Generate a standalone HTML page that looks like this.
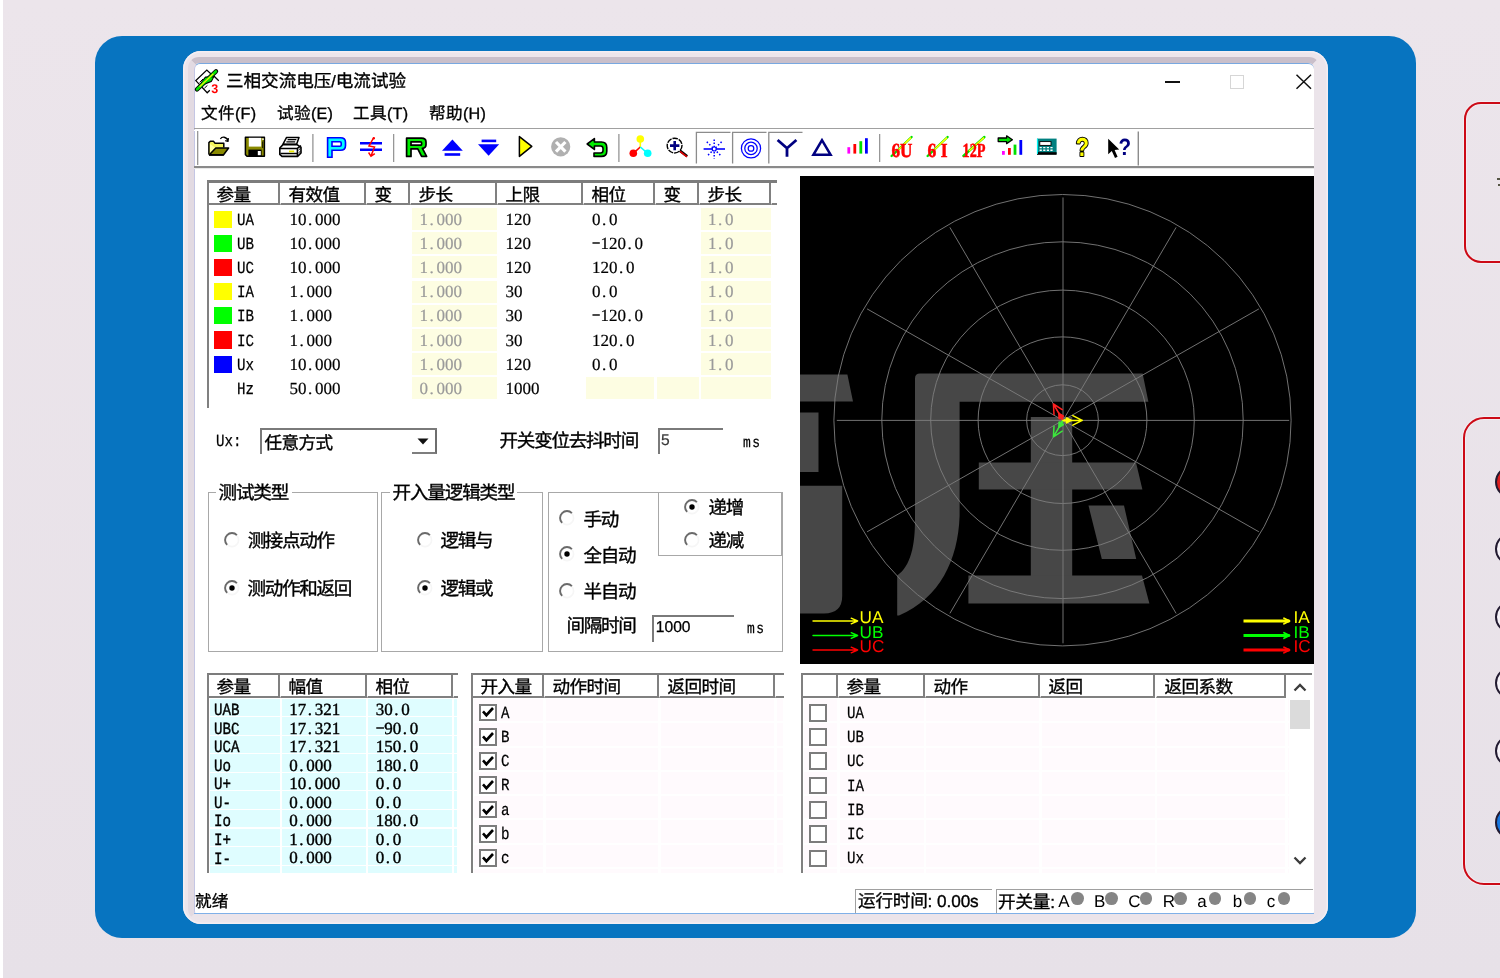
<!DOCTYPE html>
<html lang="zh"><head><meta charset="utf-8"><title>三相交流电压/电流试验</title>
<style>
html,body{margin:0;padding:0}
#page{left:0;top:0;width:1500px;height:978px;overflow:hidden;background:linear-gradient(#ece5eb,#e7e1e8)}
body{text-rendering:geometricPrecision;width:1500px;height:978px;position:relative;background:#e9e3e9;font-family:"Liberation Sans",sans-serif}
div,span,svg.cj,svg.abs{position:absolute}
svg{overflow:visible}
.blue{background:#0774c0;border-radius:27px}
.bezel{border-radius:18px;background:#ece5eb;box-shadow:inset 0 0 0 1.5px #f3eef3}
.bezin{border-radius:11px;box-sizing:border-box;border-top:6.5px solid #c9bfca;border-left:6px solid #e2dae2;border-right:6px solid #ebe4ea;border-bottom:6px solid #ebe4ea;filter:blur(.6px)}
.screen{background:#fff;border-radius:6px 6px 3px 3px;border-top:1.5px solid #78a8e0;border-left:1.2px solid #c4c6e4;box-sizing:border-box}
.redbox{border:2.6px solid #cc0a16;border-radius:21px;box-sizing:border-box;box-shadow:0 0 0 1px #f3edf2, inset 0 0 0 1px #f3edf2}
.m{font-family:"Liberation Mono",monospace;font-size:17px;line-height:17px;-webkit-text-stroke:.25px currentColor;transform:scaleX(.833);transform-origin:0 0;white-space:pre;color:#000}
.mb{-webkit-text-stroke:.4px #000}
.s{font-family:"Liberation Sans",sans-serif;line-height:1.15;white-space:pre}
svg.cj text{font-family:"Liberation Sans","Noto Sans CJK SC",sans-serif;stroke-width:20}
.hd{background:#fff;box-sizing:border-box;border-right:2px solid #808080;border-bottom:2px solid #808080;border-left:1px solid #fff}
.hdlast{border-right:none}
.combo{box-sizing:border-box;border-top:2px solid #7a7a7a;border-left:2px solid #7a7a7a;background:#fff}
.cbtn{box-sizing:border-box;border-right:2px solid #6e6e6e;border-bottom:2px solid #7e7e7e;background:#fff}
.edit{box-sizing:border-box;border-top:2px solid #7a7a7a;border-left:2px solid #7a7a7a;background:#fff}
.grp{box-sizing:border-box;border:1px solid #a8a8a8}
.chk{box-sizing:border-box;border:2.4px solid #7c7c7c;background:#fff}
.sbox{box-sizing:border-box;border-top:1px solid #a0a0a0;border-left:1px solid #a0a0a0}

.n{font-family:"Liberation Serif",serif;font-size:17px;line-height:17px;white-space:pre;color:#000;-webkit-text-stroke:.2px currentColor}
.n b{display:inline-block;width:8.5px;text-align:left;text-indent:1.5px;font-weight:normal}
.n b.d{text-align:center;text-indent:0;transform:translateY(-1.8px) scaleX(1.55)}
.nb{-webkit-text-stroke:.4px #000}
#app{filter:blur(.45px)}

</style></head>
<body>
<div id="page">
<div style="left:0.0px;top:0.0px;width:3.0px;height:978.0px;background:#fff"></div>
<div class="blue" style="left:94.5px;top:36.0px;width:1321.0px;height:901.8px;"></div>
<div class="bezel" style="left:182.5px;top:50.5px;width:1145.5px;height:873.3px;"></div>
<div class="bezin" style="left:188.0px;top:56.5px;width:1131.5px;height:863.8px;"></div>
<div class="screen" style="left:194.0px;top:63.2px;width:1119.5px;height:851.0px;"></div>
<div class="redbox" style="left:1464.0px;top:101.5px;width:80.0px;height:161.2px;border-radius:17px"></div>
<div class="redbox" style="left:1463.0px;top:416.5px;width:80.0px;height:468.3px;"></div>
<div style="left:1495.2px;top:465.7px;width:32.6px;height:32.6px;border-radius:50%;background:#dd1f1f;border:2.2px solid #221a30;box-sizing:border-box"></div>
<div style="left:1495.2px;top:532.7px;width:32.6px;height:32.6px;border-radius:50%;background:#f6f2f8;border:2.2px solid #221a30;box-sizing:border-box"></div>
<div style="left:1495.2px;top:600.7px;width:32.6px;height:32.6px;border-radius:50%;background:#f6f2f8;border:2.2px solid #221a30;box-sizing:border-box"></div>
<div style="left:1495.2px;top:666.7px;width:32.6px;height:32.6px;border-radius:50%;background:#f6f2f8;border:2.2px solid #221a30;box-sizing:border-box"></div>
<div style="left:1495.2px;top:734.7px;width:32.6px;height:32.6px;border-radius:50%;background:#f6f2f8;border:2.2px solid #221a30;box-sizing:border-box"></div>
<div style="left:1495.2px;top:806.2px;width:32.6px;height:32.6px;border-radius:50%;background:#1878e0;border:2.2px solid #221a30;box-sizing:border-box"></div>
<div style="left:1497.0px;top:178.0px;width:4.0px;height:2.0px;background:#554"></div>
<div style="left:1497.5px;top:184.0px;width:4.0px;height:2.0px;background:#554"></div>
<div id="app" style="left:0;top:0;width:1500px;height:978px">
<svg class="abs" style="left:194px;top:68px" width="28" height="28" viewBox="194 68 28 28">
<title>app icon</title>
<path d="M210.8 73.8 L206.8 70 L195.8 80.6 L207.2 92.8 L209.8 90.2 M213.6 75.8 L218.8 80.7" fill="none" stroke="#000" stroke-width="1.25"/>
<path d="M199.6 82.4 L203 79 M204.4 88.2 L207.4 85.4" fill="none" stroke="#000" stroke-width="1"/>
<path d="M197 89.4 L216 71.3" stroke="#000" stroke-width="4.4" stroke-linecap="round"/>
<path d="M201.6 82.6 L205.4 77.4 L213.4 77 L211.2 81.2 L203.6 84.2 Z" fill="#000" stroke="#000" stroke-width="1.6" stroke-linejoin="round"/>
<path d="M197.2 89.2 L215.8 71.5" stroke="#00e400" stroke-width="2.7" stroke-linecap="round"/>
<path d="M201.8 82.6 L205.6 77.8 L213 77.4 L211 81 L203.6 83.8 Z" fill="#00e400"/>
<path d="M199.6 86.8 L213.4 73.8" stroke="#f4f000" stroke-width="1.2"/>
<text x="211.2" y="92.7" font-family="Liberation Sans" font-weight="bold" font-size="12.6" fill="#ff0000" textLength="7" lengthAdjust="spacingAndGlyphs">3</text>
</svg>

<svg class="cj" style="left:226.0px;top:72.2px;" width="180.0" height="17.6" viewBox="0 -880 10256 1000" fill="#000" stroke="#000" stroke-width="18"><title>三相交流电压/电流试验</title><text x="0" y="0" font-size="1000">三相交流电压</text><text x="6000.0" y="0" font-size="920.0">/</text><text x="6256" y="0" font-size="1000">电流试验</text></svg>
<div style="left:1165.0px;top:81.2px;width:14.5px;height:1.6px;background:#111"></div>
<div style="left:1230.0px;top:75.0px;width:14.0px;height:13.5px;border:1px solid #d6d6d6;box-sizing:border-box"></div>
<svg class="abs" style="left:1295px;top:73px" width="18" height="18" viewBox="0 0 18 18"><path d="M1.5 1.8 L16 15.8 M16 1.8 L1.5 15.8" stroke="#111" stroke-width="1.5" fill="none"/></svg>
<svg class="cj" style="left:201.0px;top:104.3px;" width="55.2" height="17.0" viewBox="0 -880 3247 1000" fill="#000" stroke="#000" stroke-width="18"><title>文件(F)</title><text x="0" y="0" font-size="1000">文件</text><text x="2000.0" y="0" font-size="976.5">(F)</text></svg>
<svg class="cj" style="left:277.0px;top:104.3px;" width="56.1" height="17.0" viewBox="0 -880 3302 1000" fill="#000" stroke="#000" stroke-width="18"><title>试验(E)</title><text x="0" y="0" font-size="1000">试验</text><text x="2000.0" y="0" font-size="976.5">(E)</text></svg>
<svg class="cj" style="left:353.0px;top:104.3px;" width="55.2" height="17.0" viewBox="0 -880 3247 1000" fill="#000" stroke="#000" stroke-width="18"><title>工具(T)</title><text x="0" y="0" font-size="1000">工具</text><text x="2000.0" y="0" font-size="976.5">(T)</text></svg>
<svg class="cj" style="left:429.0px;top:104.3px;" width="57.0" height="17.0" viewBox="0 -880 3355 1000" fill="#000" stroke="#000" stroke-width="18"><title>帮助(H)</title><text x="0" y="0" font-size="1000">帮助</text><text x="2000.0" y="0" font-size="976.5">(H)</text></svg>
<div style="left:194.0px;top:128.2px;width:1119.5px;height:1.3px;background:#a0a0a0"></div>
<div style="left:194.0px;top:129.5px;width:1119.5px;height:1.0px;background:#fff"></div>
<svg class="abs" style="left:194px;top:129px" width="1119" height="38" viewBox="194 129 1119 38">
<title>toolbar</title>
<!-- grip + separators -->
<g stroke="#8c8c8c" stroke-width="1.4">
<path d="M197.8 131 V165"/>
<path d="M313 134 V162"/><path d="M393.8 134 V162"/><path d="M619 134 V162"/><path d="M879.8 134 V162"/><path d="M1138.3 131.5 V165.5"/>
</g>
<g stroke="#fff" stroke-width="1.2"><path d="M199.2 131 V165"/><path d="M314.3 134 V162"/><path d="M395.1 134 V162"/><path d="M620.3 134 V162"/><path d="M881.1 134 V162"/></g>
<!-- open -->
<g stroke-linejoin="round">
<path d="M208.9 154.6 V142.6 L210.3 141.3 H213.6 L214.9 143.2 H223.8 V147.6" fill="#f2f25a" stroke="#000" stroke-width="1.5"/>
<path d="M210 144 L215.4 147.8 L210 153 Z" fill="#ffffa0"/>
<path d="M209.4 154.8 L215.8 148 H228.6 L223.6 154.8 Z" fill="#8a8a00" stroke="#000" stroke-width="1.5"/>
<path d="M209 155.2 H223.8" stroke="#000" stroke-width="1.3"/>
<path d="M220.4 139 C221.8 136.4 226.4 136.4 228 140.6 M228.4 138.2 L228 141.4 L225.2 140.6" fill="none" stroke="#000" stroke-width="1.3"/>
</g>
<!-- save -->
<g>
<path d="M245.4 137.3 H264.4 V156.2 H247 L245.4 154.6 Z" fill="#8a8a00" stroke="#000" stroke-width="1.5" stroke-linejoin="round"/>
<rect x="248.8" y="137.8" width="12.4" height="8.8" fill="#fff"/>
<rect x="248.4" y="149.6" width="13.2" height="6.6" fill="#000"/>
<rect x="257.8" y="151" width="3" height="4.2" fill="#fff"/>
<rect x="262.3" y="138.4" width="1.4" height="1.6" fill="#fff"/>
<path d="M262.6 141.5 V148" stroke="#000" stroke-width=".8"/>
</g>
<!-- print -->
<g stroke="#000" stroke-linejoin="round">
<path d="M283 144.2 L286.6 137.4 H299 L296.6 144.2 Z" fill="#fff" stroke-width="1.5"/>
<path d="M287.6 139.6 H296.4 M286.4 141.8 H295.2" stroke-width="1.3" fill="none"/>
<path d="M279.8 148 L283 144.6 H297 L301 147.4 V153 L297.6 156.4 H282 L279.8 154.4 Z" fill="#fff" stroke-width="1.6"/>
<path d="M280 148.4 H297.4 L301 145.6 M297.4 148.4 V156 M280.4 153.6 H297.2" fill="none" stroke-width="1.5"/>
<path d="M298.4 150.2 L300.6 148.2 M298.4 153 L300.6 151 M298.4 155.4 L300.6 153.4" stroke-width="1" fill="none"/>
<path d="M289 151.4 H294.2" stroke="#e8e800" stroke-width="1.8"/>
</g>
<!-- P -->
<path d="M327.6 157.2 V137.8 H340.5 Q345.5 137.8 345.5 142.2 V145.8 Q345.5 150.2 340.5 150.2 H332 V157.2 Z M332 141.8 V146.2 H340 Q341.2 146.2 341.2 145 V143 Q341.2 141.8 340 141.8 Z" fill="#00ffff" stroke="#0000ff" stroke-width="1.6" fill-rule="evenodd"/>
<!-- not equal -->
<g fill="none">
<path d="M360 143.3 H382 M360 149.8 H382" stroke="#0000ff" stroke-width="2.4"/>
<path d="M373.8 137.5 L369 146 L374.5 147 L371.2 155.5 M368.6 152.5 L371 156.3 L374.8 153.6" stroke="#ff0000" stroke-width="1.5"/>
<circle cx="373.8" cy="138.2" r="1.2" fill="#ff0000"/>
</g>
<!-- R -->
<path d="M406.6 156.4 V138.2 H421.5 Q426 138.2 426 142 V144.8 Q426 148 422.4 148.4 L426.6 156.4 H421.6 L417.8 148.8 H411 V156.4 Z M411 141.8 V145.2 H420.4 Q421.6 145.2 421.6 144.2 V142.8 Q421.6 141.8 420.4 141.8 Z" fill="#00ee00" stroke="#000" stroke-width="1.7" fill-rule="evenodd" stroke-linejoin="round"/>
<!-- up -->
<path d="M452.4 139.4 L462.8 150.8 H442 Z" fill="#0000ff"/><rect x="444.6" y="153.2" width="15.6" height="2.6" fill="#0000ff"/>
<!-- down -->
<rect x="481.6" y="139.6" width="14.6" height="2.6" fill="#0000ff"/><path d="M478 144.2 H499.2 L488.6 155.8 Z" fill="#0000ff"/>
<!-- play -->
<path d="M519.4 136.6 L531.8 146.4 L519.4 156.4 Z" fill="#ffff00" stroke="#000" stroke-width="1.5" stroke-linejoin="round"/>
<!-- stop -->
<circle cx="560.7" cy="146.8" r="9.6" fill="#b0b0b0"/>
<path d="M556 142 L565.4 151.6 M565.4 142 L556 151.6" stroke="#fff" stroke-width="3.2"/>
<!-- undo -->
<path d="M594.4 138.6 L587.2 144 L594.4 149.4 V146 H600.6 Q603 146 603 148.6 V150.6 Q603 153 600.6 153 H594 V156.4 H601.4 Q606.8 156.4 606.8 151.2 V147.6 Q606.8 142 601.4 142 H594.4 Z" fill="#00ee00" stroke="#000" stroke-width="1.6" stroke-linejoin="round"/>
<!-- three dots -->
<path d="M640.3 139 V147" stroke="#ffff00" stroke-width="1.6"/>
<path d="M640.3 147 L633.3 153.3" stroke="#ff0000" stroke-width="1.6"/>
<path d="M640.3 147 L647.7 153.3" stroke="#00ffff" stroke-width="1.6"/>
<circle cx="640.3" cy="139" r="3.8" fill="#ffff00"/><circle cx="633.3" cy="153.3" r="3.8" fill="#ff0000"/><circle cx="647.7" cy="153.3" r="3.8" fill="#00ffff"/>
<!-- zoom -->
<path d="M679.8 150.6 L687.2 156.2" stroke="#000" stroke-width="2.6"/>
<path d="M680 151.4 L687 156.8" stroke="#e00000" stroke-width="1.7"/>
<circle cx="674.6" cy="145.6" r="7.4" fill="#fff" stroke="#000" stroke-width="1.4" stroke-dasharray="5.5 1"/>
<path d="M670 145.6 H679.4 M674.7 141 V150.3" stroke="#000080" stroke-width="2.6"/>
<!-- pressed buttons -->
<g fill="none" stroke="#8c8c8c" stroke-width="1.3">
<path d="M696.4 163.5 V132.3 H730.5"/><path d="M732.6 163.5 V132.3 H766.5"/><path d="M768.8 163.5 V132.3 H802.5"/>
</g>
<!-- star -->
<g stroke="#0000ff" fill="none">
<path d="M703.6 149 H725" stroke-width="1.6"/>
<path d="M714.2 139.5 V158.5" stroke-width="1.5" stroke-dasharray="1.5 1.6"/>
<path d="M706.8 141.8 L721.6 156.4 M721.6 141.8 L706.8 156.4" stroke-width="1.5" stroke-dasharray="1.5 2"/>
<circle cx="714.2" cy="149" r="2" stroke-width="1.2" fill="#fff"/>
</g>
<!-- rings -->
<g stroke="#0000ff" fill="none" stroke-width="1.25"><circle cx="751" cy="148.4" r="9.6"/><circle cx="751" cy="148.4" r="6.2"/><circle cx="751" cy="148.4" r="2.8"/></g>
<!-- Y -->
<path d="M777.6 140 L787 148.2 L796.4 140 M787 147.6 V156.8" fill="none" stroke="#000080" stroke-width="2.8"/>
<!-- triangle -->
<path d="M822 140.2 L813.4 154.8 H830.6 Z" fill="none" stroke="#000080" stroke-width="2.5" stroke-linejoin="miter"/>
<!-- bars -->
<rect x="847.4" y="147.2" width="2.8" height="6.4" fill="#ff00ff"/><rect x="853.4" y="144" width="2.8" height="9.6" fill="#ff0000"/><rect x="859.4" y="141.2" width="2.8" height="12.4" fill="#00e000"/><rect x="865" y="138.2" width="2.8" height="15.4" fill="#0000ff"/>
<!-- 6U 6I 12P -->
<g font-family="Liberation Serif" font-weight="bold" font-size="20" fill="#ff0000" stroke="#ff0000" stroke-width=".5">
<path d="M891.6 156 L911.6 137" stroke="#00e000" stroke-width="2.4" stroke-linecap="round"/><path d="M897 151 L911 137.6" stroke="#ffff00" stroke-width="1.5"/>
<text x="891.5" y="156.6" textLength="21" lengthAdjust="spacingAndGlyphs">6U</text>
<path d="M927.6 156 L947.6 137" stroke="#00e000" stroke-width="2.4" stroke-linecap="round"/><path d="M933 151 L947 137.6" stroke="#ffff00" stroke-width="1.5"/>
<text x="927.5" y="156.6" textLength="20" lengthAdjust="spacingAndGlyphs">6 I</text>
<path d="M963.4 156 L984.4 137" stroke="#00e000" stroke-width="2.4" stroke-linecap="round"/><path d="M969 151 L984 137.6" stroke="#ffff00" stroke-width="1.5"/>
<text x="962.6" y="156.6" textLength="23" lengthAdjust="spacingAndGlyphs">12P</text>
</g>
<!-- arrow + bars -->
<path d="M998.2 138 H1006.6 V135.8 L1012.4 139.8 L1006.6 143.6 V141.6 H998.2 Z" fill="#00e000" stroke="#000" stroke-width="1.3" stroke-linejoin="round"/>
<rect x="1002" y="151" width="2.8" height="3.8" fill="#ff00ff"/><rect x="1008" y="148" width="2.8" height="6.8" fill="#ff0000"/><rect x="1013.6" y="144.6" width="2.8" height="10.2" fill="#00e000"/><rect x="1019.4" y="140" width="2.8" height="14.8" fill="#0000ff"/>
<!-- calculator -->
<rect x="1037" y="138.6" width="19.6" height="15.6" fill="#008080"/>
<rect x="1037" y="152.2" width="19.6" height="2.6" fill="#000"/>
<rect x="1039.8" y="141.6" width="11.2" height="3.8" fill="#fff" stroke="#000" stroke-width=".9"/>
<path d="M1039.6 147.6 H1054 M1039.6 150.2 H1054" stroke="#fff" stroke-width="1.4" stroke-dasharray="2.2 1.4"/>
<path d="M1037.4 138.6 V154" stroke="#00ffff" stroke-width="1"/>
<!-- ? -->
<g font-family="Liberation Sans" font-weight="bold">
<text x="1075.8" y="156" font-size="26" font-weight="bold" fill="#ffff00" stroke="#000" stroke-width="2.2" paint-order="stroke" stroke-linejoin="round" textLength="13.2" lengthAdjust="spacingAndGlyphs">?</text>
<text x="1118.4" y="155.2" font-family="Liberation Sans" font-weight="bold" font-size="23.5" fill="#000080" textLength="12.6" lengthAdjust="spacingAndGlyphs">?</text>
</g>
<path d="M1108.2 138.8 V154.2 L1111.8 151 L1115 158 L1117.6 156.8 L1114.6 150 L1119.2 149.6 Z" fill="#000"/>
</svg>

<div style="left:194.0px;top:165.5px;width:1119.5px;height:2.0px;background:#8a8a8a"></div>
<div style="left:194.0px;top:167.5px;width:1119.5px;height:1.5px;background:#e8e8e8"></div>
<div style="left:206.5px;top:180.3px;width:570.5px;height:2.4px;background:#7c7c7c"></div><div class="hd" style="left:207.5px;top:182.5px;width:72.2px;height:22.5px;"></div><svg class="cj" style="left:216.5px;top:184.7px;" width="34.0" height="17.9" viewBox="0 -880 1905 1000" fill="#000" stroke="#000" stroke-width="14"><title>参量</title><text x="-24" y="0" font-size="1000" letter-spacing="-47.6">参量</text></svg><div class="hd" style="left:279.7px;top:182.5px;width:86.5px;height:22.5px;"></div><svg class="cj" style="left:288.7px;top:184.7px;" width="51.0" height="17.9" viewBox="0 -880 2857 1000" fill="#000" stroke="#000" stroke-width="14"><title>有效值</title><text x="-24" y="0" font-size="1000" letter-spacing="-47.6">有效值</text></svg><div class="hd" style="left:366.2px;top:182.5px;width:43.8px;height:22.5px;"></div><svg class="cj" style="left:375.2px;top:184.7px;" width="17.0" height="17.9" viewBox="0 -880 952 1000" fill="#000" stroke="#000" stroke-width="14"><title>变</title><text x="-24" y="0" font-size="1000" letter-spacing="-47.6">变</text></svg><div class="hd" style="left:410.0px;top:182.5px;width:86.5px;height:22.5px;"></div><svg class="cj" style="left:419.0px;top:184.7px;" width="34.0" height="17.9" viewBox="0 -880 1905 1000" fill="#000" stroke="#000" stroke-width="14"><title>步长</title><text x="-24" y="0" font-size="1000" letter-spacing="-47.6">步长</text></svg><div class="hd" style="left:496.5px;top:182.5px;width:86.3px;height:22.5px;"></div><svg class="cj" style="left:505.5px;top:184.7px;" width="34.0" height="17.9" viewBox="0 -880 1905 1000" fill="#000" stroke="#000" stroke-width="14"><title>上限</title><text x="-24" y="0" font-size="1000" letter-spacing="-47.6">上限</text></svg><div class="hd" style="left:582.8px;top:182.5px;width:72.4px;height:22.5px;"></div><svg class="cj" style="left:591.8px;top:184.7px;" width="34.0" height="17.9" viewBox="0 -880 1905 1000" fill="#000" stroke="#000" stroke-width="14"><title>相位</title><text x="-24" y="0" font-size="1000" letter-spacing="-47.6">相位</text></svg><div class="hd" style="left:655.2px;top:182.5px;width:43.8px;height:22.5px;"></div><svg class="cj" style="left:664.2px;top:184.7px;" width="17.0" height="17.9" viewBox="0 -880 952 1000" fill="#000" stroke="#000" stroke-width="14"><title>变</title><text x="-24" y="0" font-size="1000" letter-spacing="-47.6">变</text></svg><div class="hd" style="left:699.0px;top:182.5px;width:72.0px;height:22.5px;"></div><svg class="cj" style="left:708.0px;top:184.7px;" width="34.0" height="17.9" viewBox="0 -880 1905 1000" fill="#000" stroke="#000" stroke-width="14"><title>步长</title><text x="-24" y="0" font-size="1000" letter-spacing="-47.6">步长</text></svg><div class="hd hdlast" style="left:771.0px;top:182.5px;width:6.0px;height:22.5px;"></div>
<div style="left:206.5px;top:181.0px;width:2.0px;height:226.5px;background:#808080"></div>
<div style="left:412.0px;top:208.0px;width:84.5px;height:22.2px;background:#fdfde2"></div>
<div style="left:701.0px;top:208.0px;width:70.3px;height:22.2px;background:#fdfde2"></div>
<div style="left:214.0px;top:210.6px;width:17.5px;height:17.2px;background:#ffff00"></div>
<span class="m" style="left:237.3px;top:212.8px;">UA</span>
<span class="n" style="left:289.5px;top:210.8px;">10<b>.</b>000</span>
<span class="n" style="left:419.5px;top:210.8px;color:#9a9a9a;">1<b>.</b>000</span>
<span class="n" style="left:505.5px;top:210.8px;">120</span>
<span class="n" style="left:592.0px;top:210.8px;">0<b>.</b>0</span>
<span class="n" style="left:708.0px;top:210.8px;color:#9a9a9a;">1<b>.</b>0</span>
<div style="left:412.0px;top:232.2px;width:84.5px;height:22.2px;background:#fdfde2"></div>
<div style="left:701.0px;top:232.2px;width:70.3px;height:22.2px;background:#fdfde2"></div>
<div style="left:214.0px;top:234.8px;width:17.5px;height:17.2px;background:#00ff00"></div>
<span class="m" style="left:237.3px;top:237.0px;">UB</span>
<span class="n" style="left:289.5px;top:235.0px;">10<b>.</b>000</span>
<span class="n" style="left:419.5px;top:235.0px;color:#9a9a9a;">1<b>.</b>000</span>
<span class="n" style="left:505.5px;top:235.0px;">120</span>
<span class="n" style="left:592.0px;top:235.0px;"><b class="d">-</b>120<b>.</b>0</span>
<span class="n" style="left:708.0px;top:235.0px;color:#9a9a9a;">1<b>.</b>0</span>
<div style="left:412.0px;top:256.3px;width:84.5px;height:22.2px;background:#fdfde2"></div>
<div style="left:701.0px;top:256.3px;width:70.3px;height:22.2px;background:#fdfde2"></div>
<div style="left:214.0px;top:258.9px;width:17.5px;height:17.2px;background:#ff0000"></div>
<span class="m" style="left:237.3px;top:261.1px;">UC</span>
<span class="n" style="left:289.5px;top:259.1px;">10<b>.</b>000</span>
<span class="n" style="left:419.5px;top:259.1px;color:#9a9a9a;">1<b>.</b>000</span>
<span class="n" style="left:505.5px;top:259.1px;">120</span>
<span class="n" style="left:592.0px;top:259.1px;">120<b>.</b>0</span>
<span class="n" style="left:708.0px;top:259.1px;color:#9a9a9a;">1<b>.</b>0</span>
<div style="left:412.0px;top:280.5px;width:84.5px;height:22.2px;background:#fdfde2"></div>
<div style="left:701.0px;top:280.5px;width:70.3px;height:22.2px;background:#fdfde2"></div>
<div style="left:214.0px;top:283.1px;width:17.5px;height:17.2px;background:#ffff00"></div>
<span class="m" style="left:237.3px;top:285.3px;">IA</span>
<span class="n" style="left:289.5px;top:283.3px;">1<b>.</b>000</span>
<span class="n" style="left:419.5px;top:283.3px;color:#9a9a9a;">1<b>.</b>000</span>
<span class="n" style="left:505.5px;top:283.3px;">30</span>
<span class="n" style="left:592.0px;top:283.3px;">0<b>.</b>0</span>
<span class="n" style="left:708.0px;top:283.3px;color:#9a9a9a;">1<b>.</b>0</span>
<div style="left:412.0px;top:304.6px;width:84.5px;height:22.2px;background:#fdfde2"></div>
<div style="left:701.0px;top:304.6px;width:70.3px;height:22.2px;background:#fdfde2"></div>
<div style="left:214.0px;top:307.2px;width:17.5px;height:17.2px;background:#00ff00"></div>
<span class="m" style="left:237.3px;top:309.4px;">IB</span>
<span class="n" style="left:289.5px;top:307.4px;">1<b>.</b>000</span>
<span class="n" style="left:419.5px;top:307.4px;color:#9a9a9a;">1<b>.</b>000</span>
<span class="n" style="left:505.5px;top:307.4px;">30</span>
<span class="n" style="left:592.0px;top:307.4px;"><b class="d">-</b>120<b>.</b>0</span>
<span class="n" style="left:708.0px;top:307.4px;color:#9a9a9a;">1<b>.</b>0</span>
<div style="left:412.0px;top:328.8px;width:84.5px;height:22.2px;background:#fdfde2"></div>
<div style="left:701.0px;top:328.8px;width:70.3px;height:22.2px;background:#fdfde2"></div>
<div style="left:214.0px;top:331.4px;width:17.5px;height:17.2px;background:#ff0000"></div>
<span class="m" style="left:237.3px;top:333.6px;">IC</span>
<span class="n" style="left:289.5px;top:331.6px;">1<b>.</b>000</span>
<span class="n" style="left:419.5px;top:331.6px;color:#9a9a9a;">1<b>.</b>000</span>
<span class="n" style="left:505.5px;top:331.6px;">30</span>
<span class="n" style="left:592.0px;top:331.6px;">120<b>.</b>0</span>
<span class="n" style="left:708.0px;top:331.6px;color:#9a9a9a;">1<b>.</b>0</span>
<div style="left:412.0px;top:353.0px;width:84.5px;height:22.2px;background:#fdfde2"></div>
<div style="left:701.0px;top:353.0px;width:70.3px;height:22.2px;background:#fdfde2"></div>
<div style="left:214.0px;top:355.6px;width:17.5px;height:17.2px;background:#0000ff"></div>
<span class="m" style="left:237.3px;top:357.8px;">Ux</span>
<span class="n" style="left:289.5px;top:355.8px;">10<b>.</b>000</span>
<span class="n" style="left:419.5px;top:355.8px;color:#9a9a9a;">1<b>.</b>000</span>
<span class="n" style="left:505.5px;top:355.8px;">120</span>
<span class="n" style="left:592.0px;top:355.8px;">0<b>.</b>0</span>
<span class="n" style="left:708.0px;top:355.8px;color:#9a9a9a;">1<b>.</b>0</span>
<div style="left:412.0px;top:377.1px;width:84.5px;height:22.2px;background:#fdfde2"></div>
<div style="left:586.0px;top:377.1px;width:68.0px;height:22.2px;background:#fdfde2"></div>
<div style="left:657.0px;top:377.1px;width:41.5px;height:22.2px;background:#fdfde2"></div>
<div style="left:701.0px;top:377.1px;width:70.3px;height:22.2px;background:#fdfde2"></div>
<span class="m" style="left:237.3px;top:381.9px;">Hz</span>
<span class="n" style="left:289.5px;top:379.9px;">50<b>.</b>000</span>
<span class="n" style="left:419.5px;top:379.9px;color:#9a9a9a;">0<b>.</b>000</span>
<span class="n" style="left:505.5px;top:379.9px;">1000</span>
<span class="m" style="left:216.0px;top:433.5px;">Ux:</span>
<div class="combo" style="left:260.0px;top:428.0px;width:176.5px;height:25.5px;"></div>
<svg class="cj" style="left:265.0px;top:432.6px;" width="68.0" height="17.9" viewBox="0 -880 3810 1000" fill="#000" stroke="#000" stroke-width="14"><title>任意方式</title><text x="-24" y="0" font-size="1000" letter-spacing="-47.6">任意方式</text></svg>
<div class="cbtn" style="left:412.0px;top:430.0px;width:25.0px;height:23.5px;"></div>
<svg class="abs" style="left:417px;top:438px" width="12" height="7" viewBox="0 0 12 7"><path d="M0.5 0.5 H11.5 L6 6.5 Z" fill="#111"/></svg>
<svg class="cj" style="left:499.6px;top:431.2px;" width="138.4" height="18.2" viewBox="0 -880 7619 1000" fill="#000" stroke="#000" stroke-width="14"><title>开关变位去抖时间</title><text x="-24" y="0" font-size="1000" letter-spacing="-47.6">开关变位去抖时间</text></svg>
<div class="edit" style="left:657.5px;top:428.0px;width:65.0px;height:26.0px;"></div>
<span class="s" style="left:661.0px;top:431.8px;font-size:15.6px;color:#3a3a3a;-webkit-text-stroke:.2px #3a3a3a">5</span>
<span class="m" style="left:743.0px;top:435.0px;letter-spacing:1.8px;font-size:15.5px">ms</span>
<div class="grp" style="left:207.8px;top:492.4px;width:170.6px;height:159.6px;"></div><div style="left:216.0px;top:490.4px;width:76.0px;height:5.0px;background:#fff"></div><svg class="cj" style="left:218.5px;top:482.7px;" width="69.6" height="18.3" viewBox="0 -880 3810 1000" fill="#000" stroke="#000" stroke-width="14"><title>测试类型</title><text x="-24" y="0" font-size="1000" letter-spacing="-47.6">测试类型</text></svg>
<div class="grp" style="left:381.3px;top:492.4px;width:161.5px;height:159.6px;"></div><div style="left:390.0px;top:490.4px;width:127.0px;height:5.0px;background:#fff"></div><svg class="cj" style="left:392.5px;top:482.7px;" width="121.8" height="18.3" viewBox="0 -880 6667 1000" fill="#000" stroke="#000" stroke-width="14"><title>开入量逻辑类型</title><text x="-24" y="0" font-size="1000" letter-spacing="-47.6">开入量逻辑类型</text></svg>
<div class="grp" style="left:548.0px;top:492.4px;width:234.6px;height:159.6px;"></div>
<div class="grp" style="left:658.0px;top:492.4px;width:124.3px;height:63.4px;background:#fff"></div>
<svg class="abs" style="left:223.0px;top:530.5px" width="18" height="18" viewBox="-9 -9 18 18"><circle r="6.6" fill="#fff" stroke="#f6f6f6" stroke-width="1.6"/><path d="M-4.9 4.9 A6.9 6.9 0 0 1 4.9 -4.9" fill="none" stroke="#6a6a6a" stroke-width="1.9"/></svg>
<svg class="cj" style="left:248.0px;top:530.8px;" width="86.3" height="18.1" viewBox="0 -880 4762 1000" fill="#000" stroke="#000" stroke-width="14"><title>测接点动作</title><text x="-24" y="0" font-size="1000" letter-spacing="-47.6">测接点动作</text></svg>
<svg class="abs" style="left:223.0px;top:579.0px" width="18" height="18" viewBox="-9 -9 18 18"><circle r="6.6" fill="#fff" stroke="#f6f6f6" stroke-width="1.6"/><path d="M-4.9 4.9 A6.9 6.9 0 0 1 4.9 -4.9" fill="none" stroke="#6a6a6a" stroke-width="1.9"/><circle r="2.7" fill="#000"/></svg>
<svg class="cj" style="left:248.0px;top:579.4px;" width="103.5" height="18.1" viewBox="0 -880 5714 1000" fill="#000" stroke="#000" stroke-width="14"><title>测动作和返回</title><text x="-24" y="0" font-size="1000" letter-spacing="-47.6">测动作和返回</text></svg>
<svg class="abs" style="left:416.0px;top:530.5px" width="18" height="18" viewBox="-9 -9 18 18"><circle r="6.6" fill="#fff" stroke="#f6f6f6" stroke-width="1.6"/><path d="M-4.9 4.9 A6.9 6.9 0 0 1 4.9 -4.9" fill="none" stroke="#6a6a6a" stroke-width="1.9"/></svg>
<svg class="cj" style="left:441.0px;top:530.8px;" width="51.8" height="18.1" viewBox="0 -880 2857 1000" fill="#000" stroke="#000" stroke-width="14"><title>逻辑与</title><text x="-24" y="0" font-size="1000" letter-spacing="-47.6">逻辑与</text></svg>
<svg class="abs" style="left:416.0px;top:579.0px" width="18" height="18" viewBox="-9 -9 18 18"><circle r="6.6" fill="#fff" stroke="#f6f6f6" stroke-width="1.6"/><path d="M-4.9 4.9 A6.9 6.9 0 0 1 4.9 -4.9" fill="none" stroke="#6a6a6a" stroke-width="1.9"/><circle r="2.7" fill="#000"/></svg>
<svg class="cj" style="left:441.0px;top:579.4px;" width="51.8" height="18.1" viewBox="0 -880 2857 1000" fill="#000" stroke="#000" stroke-width="14"><title>逻辑或</title><text x="-24" y="0" font-size="1000" letter-spacing="-47.6">逻辑或</text></svg>
<svg class="abs" style="left:558.0px;top:509.0px" width="18" height="18" viewBox="-9 -9 18 18"><circle r="6.6" fill="#fff" stroke="#f6f6f6" stroke-width="1.6"/><path d="M-4.9 4.9 A6.9 6.9 0 0 1 4.9 -4.9" fill="none" stroke="#6a6a6a" stroke-width="1.9"/></svg>
<svg class="cj" style="left:584.0px;top:509.8px;" width="34.5" height="18.1" viewBox="0 -880 1905 1000" fill="#000" stroke="#000" stroke-width="14"><title>手动</title><text x="-24" y="0" font-size="1000" letter-spacing="-47.6">手动</text></svg>
<svg class="abs" style="left:558.0px;top:545.0px" width="18" height="18" viewBox="-9 -9 18 18"><circle r="6.6" fill="#fff" stroke="#f6f6f6" stroke-width="1.6"/><path d="M-4.9 4.9 A6.9 6.9 0 0 1 4.9 -4.9" fill="none" stroke="#6a6a6a" stroke-width="1.9"/><circle r="2.7" fill="#000"/></svg>
<svg class="cj" style="left:584.0px;top:545.6px;" width="51.8" height="18.1" viewBox="0 -880 2857 1000" fill="#000" stroke="#000" stroke-width="14"><title>全自动</title><text x="-24" y="0" font-size="1000" letter-spacing="-47.6">全自动</text></svg>
<svg class="abs" style="left:558.0px;top:581.5px" width="18" height="18" viewBox="-9 -9 18 18"><circle r="6.6" fill="#fff" stroke="#f6f6f6" stroke-width="1.6"/><path d="M-4.9 4.9 A6.9 6.9 0 0 1 4.9 -4.9" fill="none" stroke="#6a6a6a" stroke-width="1.9"/></svg>
<svg class="cj" style="left:584.0px;top:582.1px;" width="51.8" height="18.1" viewBox="0 -880 2857 1000" fill="#000" stroke="#000" stroke-width="14"><title>半自动</title><text x="-24" y="0" font-size="1000" letter-spacing="-47.6">半自动</text></svg>
<svg class="abs" style="left:683.0px;top:498.0px" width="18" height="18" viewBox="-9 -9 18 18"><circle r="6.6" fill="#fff" stroke="#f6f6f6" stroke-width="1.6"/><path d="M-4.9 4.9 A6.9 6.9 0 0 1 4.9 -4.9" fill="none" stroke="#6a6a6a" stroke-width="1.9"/><circle r="2.7" fill="#000"/></svg>
<svg class="cj" style="left:709.0px;top:498.2px;" width="34.5" height="18.1" viewBox="0 -880 1905 1000" fill="#000" stroke="#000" stroke-width="14"><title>递增</title><text x="-24" y="0" font-size="1000" letter-spacing="-47.6">递增</text></svg>
<svg class="abs" style="left:683.0px;top:530.5px" width="18" height="18" viewBox="-9 -9 18 18"><circle r="6.6" fill="#fff" stroke="#f6f6f6" stroke-width="1.6"/><path d="M-4.9 4.9 A6.9 6.9 0 0 1 4.9 -4.9" fill="none" stroke="#6a6a6a" stroke-width="1.9"/></svg>
<svg class="cj" style="left:709.0px;top:530.8px;" width="34.5" height="18.1" viewBox="0 -880 1905 1000" fill="#000" stroke="#000" stroke-width="14"><title>递减</title><text x="-24" y="0" font-size="1000" letter-spacing="-47.6">递减</text></svg>
<svg class="cj" style="left:566.5px;top:616.1px;" width="69.0" height="18.1" viewBox="0 -880 3810 1000" fill="#000" stroke="#000" stroke-width="14"><title>间隔时间</title><text x="-24" y="0" font-size="1000" letter-spacing="-47.6">间隔时间</text></svg>
<div class="edit" style="left:651.5px;top:614.5px;width:82.0px;height:27.0px;"></div>
<span class="s" style="left:655.8px;top:618.6px;font-size:15.6px;color:#000;-webkit-text-stroke:.3px #000">1000</span>
<span class="m" style="left:747.0px;top:620.5px;letter-spacing:1.8px;font-size:15.5px">ms</span>
<div style="left:206.5px;top:672.8px;width:251.0px;height:2.4px;background:#7c7c7c"></div><div class="hd" style="left:207.5px;top:675.0px;width:72.5px;height:22.5px;"></div><svg class="cj" style="left:216.5px;top:677.2px;" width="34.0" height="17.9" viewBox="0 -880 1905 1000" fill="#000" stroke="#000" stroke-width="14"><title>参量</title><text x="-24" y="0" font-size="1000" letter-spacing="-47.6">参量</text></svg><div class="hd" style="left:280.0px;top:675.0px;width:86.5px;height:22.5px;"></div><svg class="cj" style="left:289.0px;top:677.2px;" width="34.0" height="17.9" viewBox="0 -880 1905 1000" fill="#000" stroke="#000" stroke-width="14"><title>幅值</title><text x="-24" y="0" font-size="1000" letter-spacing="-47.6">幅值</text></svg><div class="hd" style="left:366.5px;top:675.0px;width:86.5px;height:22.5px;"></div><svg class="cj" style="left:375.5px;top:677.2px;" width="34.0" height="17.9" viewBox="0 -880 1905 1000" fill="#000" stroke="#000" stroke-width="14"><title>相位</title><text x="-24" y="0" font-size="1000" letter-spacing="-47.6">相位</text></svg><div class="hd hdlast" style="left:453.0px;top:675.0px;width:4.5px;height:22.5px;"></div>
<div style="left:206.5px;top:673.5px;width:2.0px;height:199.5px;background:#808080"></div>
<div style="left:209.5px;top:698.7px;width:70.3px;height:17.5px;background:#dffdff"></div>
<div style="left:281.8px;top:698.7px;width:84.3px;height:17.5px;background:#dffdff"></div>
<div style="left:368.2px;top:698.7px;width:84.3px;height:17.5px;background:#dffdff"></div>
<div style="left:454.3px;top:698.7px;width:3.2px;height:17.5px;background:#dffdff"></div>
<span class="m mb" style="left:214.3px;top:703.2px;">UAB</span>
<span class="n nb" style="left:289.3px;top:701.1px;">17<b>.</b>321</span>
<span class="n nb" style="left:375.8px;top:701.1px;">30<b>.</b>0</span>
<div style="left:209.5px;top:717.2px;width:70.3px;height:17.5px;background:#dffdff"></div>
<div style="left:281.8px;top:717.2px;width:84.3px;height:17.5px;background:#dffdff"></div>
<div style="left:368.2px;top:717.2px;width:84.3px;height:17.5px;background:#dffdff"></div>
<div style="left:454.3px;top:717.2px;width:3.2px;height:17.5px;background:#dffdff"></div>
<span class="m mb" style="left:214.3px;top:721.7px;">UBC</span>
<span class="n nb" style="left:289.3px;top:719.6px;">17<b>.</b>321</span>
<span class="n nb" style="left:375.8px;top:719.6px;"><b class="d">-</b>90<b>.</b>0</span>
<div style="left:209.5px;top:735.8px;width:70.3px;height:17.5px;background:#dffdff"></div>
<div style="left:281.8px;top:735.8px;width:84.3px;height:17.5px;background:#dffdff"></div>
<div style="left:368.2px;top:735.8px;width:84.3px;height:17.5px;background:#dffdff"></div>
<div style="left:454.3px;top:735.8px;width:3.2px;height:17.5px;background:#dffdff"></div>
<span class="m mb" style="left:214.3px;top:740.3px;">UCA</span>
<span class="n nb" style="left:289.3px;top:738.2px;">17<b>.</b>321</span>
<span class="n nb" style="left:375.8px;top:738.2px;">150<b>.</b>0</span>
<div style="left:209.5px;top:754.3px;width:70.3px;height:17.5px;background:#dffdff"></div>
<div style="left:281.8px;top:754.3px;width:84.3px;height:17.5px;background:#dffdff"></div>
<div style="left:368.2px;top:754.3px;width:84.3px;height:17.5px;background:#dffdff"></div>
<div style="left:454.3px;top:754.3px;width:3.2px;height:17.5px;background:#dffdff"></div>
<span class="m mb" style="left:214.3px;top:758.8px;">Uo</span>
<span class="n nb" style="left:289.3px;top:756.7px;">0<b>.</b>000</span>
<span class="n nb" style="left:375.8px;top:756.7px;">180<b>.</b>0</span>
<div style="left:209.5px;top:772.9px;width:70.3px;height:17.5px;background:#dffdff"></div>
<div style="left:281.8px;top:772.9px;width:84.3px;height:17.5px;background:#dffdff"></div>
<div style="left:368.2px;top:772.9px;width:84.3px;height:17.5px;background:#dffdff"></div>
<div style="left:454.3px;top:772.9px;width:3.2px;height:17.5px;background:#dffdff"></div>
<span class="m mb" style="left:214.3px;top:777.4px;">U+</span>
<span class="n nb" style="left:289.3px;top:775.3px;">10<b>.</b>000</span>
<span class="n nb" style="left:375.8px;top:775.3px;">0<b>.</b>0</span>
<div style="left:209.5px;top:791.4px;width:70.3px;height:17.5px;background:#dffdff"></div>
<div style="left:281.8px;top:791.4px;width:84.3px;height:17.5px;background:#dffdff"></div>
<div style="left:368.2px;top:791.4px;width:84.3px;height:17.5px;background:#dffdff"></div>
<div style="left:454.3px;top:791.4px;width:3.2px;height:17.5px;background:#dffdff"></div>
<span class="m mb" style="left:214.3px;top:795.9px;">U-</span>
<span class="n nb" style="left:289.3px;top:793.8px;">0<b>.</b>000</span>
<span class="n nb" style="left:375.8px;top:793.8px;">0<b>.</b>0</span>
<div style="left:209.5px;top:809.9px;width:70.3px;height:17.5px;background:#dffdff"></div>
<div style="left:281.8px;top:809.9px;width:84.3px;height:17.5px;background:#dffdff"></div>
<div style="left:368.2px;top:809.9px;width:84.3px;height:17.5px;background:#dffdff"></div>
<div style="left:454.3px;top:809.9px;width:3.2px;height:17.5px;background:#dffdff"></div>
<span class="m mb" style="left:214.3px;top:814.4px;">Io</span>
<span class="n nb" style="left:289.3px;top:812.3px;">0<b>.</b>000</span>
<span class="n nb" style="left:375.8px;top:812.3px;">180<b>.</b>0</span>
<div style="left:209.5px;top:828.5px;width:70.3px;height:17.5px;background:#dffdff"></div>
<div style="left:281.8px;top:828.5px;width:84.3px;height:17.5px;background:#dffdff"></div>
<div style="left:368.2px;top:828.5px;width:84.3px;height:17.5px;background:#dffdff"></div>
<div style="left:454.3px;top:828.5px;width:3.2px;height:17.5px;background:#dffdff"></div>
<span class="m mb" style="left:214.3px;top:833.0px;">I+</span>
<span class="n nb" style="left:289.3px;top:830.9px;">1<b>.</b>000</span>
<span class="n nb" style="left:375.8px;top:830.9px;">0<b>.</b>0</span>
<div style="left:209.5px;top:847.0px;width:70.3px;height:17.5px;background:#dffdff"></div>
<div style="left:281.8px;top:847.0px;width:84.3px;height:17.5px;background:#dffdff"></div>
<div style="left:368.2px;top:847.0px;width:84.3px;height:17.5px;background:#dffdff"></div>
<div style="left:454.3px;top:847.0px;width:3.2px;height:17.5px;background:#dffdff"></div>
<span class="m mb" style="left:214.3px;top:851.5px;">I-</span>
<span class="n nb" style="left:289.3px;top:849.4px;">0<b>.</b>000</span>
<span class="n nb" style="left:375.8px;top:849.4px;">0<b>.</b>0</span>
<div style="left:209.5px;top:865.6px;width:70.3px;height:7.0px;background:#dffdff"></div>
<div style="left:281.8px;top:865.6px;width:84.3px;height:7.0px;background:#dffdff"></div>
<div style="left:368.2px;top:865.6px;width:84.3px;height:7.0px;background:#dffdff"></div>
<div style="left:454.3px;top:865.6px;width:3.2px;height:7.0px;background:#dffdff"></div>
<div style="left:470.5px;top:672.8px;width:313.0px;height:2.4px;background:#7c7c7c"></div><div class="hd" style="left:471.5px;top:675.0px;width:72.5px;height:22.5px;"></div><svg class="cj" style="left:480.5px;top:677.2px;" width="51.0" height="17.9" viewBox="0 -880 2857 1000" fill="#000" stroke="#000" stroke-width="14"><title>开入量</title><text x="-24" y="0" font-size="1000" letter-spacing="-47.6">开入量</text></svg><div class="hd" style="left:544.0px;top:675.0px;width:115.3px;height:22.5px;"></div><svg class="cj" style="left:553.0px;top:677.2px;" width="68.0" height="17.9" viewBox="0 -880 3810 1000" fill="#000" stroke="#000" stroke-width="14"><title>动作时间</title><text x="-24" y="0" font-size="1000" letter-spacing="-47.6">动作时间</text></svg><div class="hd" style="left:659.3px;top:675.0px;width:115.7px;height:22.5px;"></div><svg class="cj" style="left:668.3px;top:677.2px;" width="68.0" height="17.9" viewBox="0 -880 3810 1000" fill="#000" stroke="#000" stroke-width="14"><title>返回时间</title><text x="-24" y="0" font-size="1000" letter-spacing="-47.6">返回时间</text></svg><div class="hd hdlast" style="left:775.0px;top:675.0px;width:8.5px;height:22.5px;"></div>
<div style="left:470.5px;top:673.5px;width:2.0px;height:199.5px;background:#808080"></div>
<div style="left:473.5px;top:699.0px;width:69.5px;height:22.4px;background:#fffafd"></div>
<div style="left:545.8px;top:699.0px;width:112.4px;height:22.4px;background:#fffafd"></div>
<div style="left:661.0px;top:699.0px;width:113.0px;height:22.4px;background:#fffafd"></div>
<div style="left:776.8px;top:699.0px;width:6.7px;height:22.4px;background:#fffafd"></div>
<div style="left:803.5px;top:699.0px;width:33.5px;height:22.4px;background:#fffafd"></div>
<div style="left:839.8px;top:699.0px;width:83.8px;height:22.4px;background:#fffafd"></div>
<div style="left:926.4px;top:699.0px;width:112.8px;height:22.4px;background:#fffafd"></div>
<div style="left:1042.0px;top:699.0px;width:112.5px;height:22.4px;background:#fffafd"></div>
<div style="left:1157.3px;top:699.0px;width:127.7px;height:22.4px;background:#fffafd"></div>
<div style="left:1287.6px;top:699.0px;width:1.9px;height:22.4px;background:#fffafd"></div>
<div style="left:473.5px;top:723.3px;width:69.5px;height:22.4px;background:#fffafd"></div>
<div style="left:545.8px;top:723.3px;width:112.4px;height:22.4px;background:#fffafd"></div>
<div style="left:661.0px;top:723.3px;width:113.0px;height:22.4px;background:#fffafd"></div>
<div style="left:776.8px;top:723.3px;width:6.7px;height:22.4px;background:#fffafd"></div>
<div style="left:803.5px;top:723.3px;width:33.5px;height:22.4px;background:#fffafd"></div>
<div style="left:839.8px;top:723.3px;width:83.8px;height:22.4px;background:#fffafd"></div>
<div style="left:926.4px;top:723.3px;width:112.8px;height:22.4px;background:#fffafd"></div>
<div style="left:1042.0px;top:723.3px;width:112.5px;height:22.4px;background:#fffafd"></div>
<div style="left:1157.3px;top:723.3px;width:127.7px;height:22.4px;background:#fffafd"></div>
<div style="left:1287.6px;top:723.3px;width:1.9px;height:22.4px;background:#fffafd"></div>
<div style="left:473.5px;top:747.6px;width:69.5px;height:22.4px;background:#fffafd"></div>
<div style="left:545.8px;top:747.6px;width:112.4px;height:22.4px;background:#fffafd"></div>
<div style="left:661.0px;top:747.6px;width:113.0px;height:22.4px;background:#fffafd"></div>
<div style="left:776.8px;top:747.6px;width:6.7px;height:22.4px;background:#fffafd"></div>
<div style="left:803.5px;top:747.6px;width:33.5px;height:22.4px;background:#fffafd"></div>
<div style="left:839.8px;top:747.6px;width:83.8px;height:22.4px;background:#fffafd"></div>
<div style="left:926.4px;top:747.6px;width:112.8px;height:22.4px;background:#fffafd"></div>
<div style="left:1042.0px;top:747.6px;width:112.5px;height:22.4px;background:#fffafd"></div>
<div style="left:1157.3px;top:747.6px;width:127.7px;height:22.4px;background:#fffafd"></div>
<div style="left:1287.6px;top:747.6px;width:1.9px;height:22.4px;background:#fffafd"></div>
<div style="left:473.5px;top:771.8px;width:69.5px;height:22.4px;background:#fffafd"></div>
<div style="left:545.8px;top:771.8px;width:112.4px;height:22.4px;background:#fffafd"></div>
<div style="left:661.0px;top:771.8px;width:113.0px;height:22.4px;background:#fffafd"></div>
<div style="left:776.8px;top:771.8px;width:6.7px;height:22.4px;background:#fffafd"></div>
<div style="left:803.5px;top:771.8px;width:33.5px;height:22.4px;background:#fffafd"></div>
<div style="left:839.8px;top:771.8px;width:83.8px;height:22.4px;background:#fffafd"></div>
<div style="left:926.4px;top:771.8px;width:112.8px;height:22.4px;background:#fffafd"></div>
<div style="left:1042.0px;top:771.8px;width:112.5px;height:22.4px;background:#fffafd"></div>
<div style="left:1157.3px;top:771.8px;width:127.7px;height:22.4px;background:#fffafd"></div>
<div style="left:1287.6px;top:771.8px;width:1.9px;height:22.4px;background:#fffafd"></div>
<div style="left:473.5px;top:796.1px;width:69.5px;height:22.4px;background:#fffafd"></div>
<div style="left:545.8px;top:796.1px;width:112.4px;height:22.4px;background:#fffafd"></div>
<div style="left:661.0px;top:796.1px;width:113.0px;height:22.4px;background:#fffafd"></div>
<div style="left:776.8px;top:796.1px;width:6.7px;height:22.4px;background:#fffafd"></div>
<div style="left:803.5px;top:796.1px;width:33.5px;height:22.4px;background:#fffafd"></div>
<div style="left:839.8px;top:796.1px;width:83.8px;height:22.4px;background:#fffafd"></div>
<div style="left:926.4px;top:796.1px;width:112.8px;height:22.4px;background:#fffafd"></div>
<div style="left:1042.0px;top:796.1px;width:112.5px;height:22.4px;background:#fffafd"></div>
<div style="left:1157.3px;top:796.1px;width:127.7px;height:22.4px;background:#fffafd"></div>
<div style="left:1287.6px;top:796.1px;width:1.9px;height:22.4px;background:#fffafd"></div>
<div style="left:473.5px;top:820.4px;width:69.5px;height:22.4px;background:#fffafd"></div>
<div style="left:545.8px;top:820.4px;width:112.4px;height:22.4px;background:#fffafd"></div>
<div style="left:661.0px;top:820.4px;width:113.0px;height:22.4px;background:#fffafd"></div>
<div style="left:776.8px;top:820.4px;width:6.7px;height:22.4px;background:#fffafd"></div>
<div style="left:803.5px;top:820.4px;width:33.5px;height:22.4px;background:#fffafd"></div>
<div style="left:839.8px;top:820.4px;width:83.8px;height:22.4px;background:#fffafd"></div>
<div style="left:926.4px;top:820.4px;width:112.8px;height:22.4px;background:#fffafd"></div>
<div style="left:1042.0px;top:820.4px;width:112.5px;height:22.4px;background:#fffafd"></div>
<div style="left:1157.3px;top:820.4px;width:127.7px;height:22.4px;background:#fffafd"></div>
<div style="left:1287.6px;top:820.4px;width:1.9px;height:22.4px;background:#fffafd"></div>
<div style="left:473.5px;top:844.7px;width:69.5px;height:22.4px;background:#fffafd"></div>
<div style="left:545.8px;top:844.7px;width:112.4px;height:22.4px;background:#fffafd"></div>
<div style="left:661.0px;top:844.7px;width:113.0px;height:22.4px;background:#fffafd"></div>
<div style="left:776.8px;top:844.7px;width:6.7px;height:22.4px;background:#fffafd"></div>
<div style="left:803.5px;top:844.7px;width:33.5px;height:22.4px;background:#fffafd"></div>
<div style="left:839.8px;top:844.7px;width:83.8px;height:22.4px;background:#fffafd"></div>
<div style="left:926.4px;top:844.7px;width:112.8px;height:22.4px;background:#fffafd"></div>
<div style="left:1042.0px;top:844.7px;width:112.5px;height:22.4px;background:#fffafd"></div>
<div style="left:1157.3px;top:844.7px;width:127.7px;height:22.4px;background:#fffafd"></div>
<div style="left:1287.6px;top:844.7px;width:1.9px;height:22.4px;background:#fffafd"></div>
<div style="left:473.5px;top:869.0px;width:69.5px;height:3.6px;background:#fffafd"></div>
<div style="left:545.8px;top:869.0px;width:112.4px;height:3.6px;background:#fffafd"></div>
<div style="left:661.0px;top:869.0px;width:113.0px;height:3.6px;background:#fffafd"></div>
<div style="left:776.8px;top:869.0px;width:6.7px;height:3.6px;background:#fffafd"></div>
<div style="left:803.5px;top:869.0px;width:33.5px;height:3.6px;background:#fffafd"></div>
<div style="left:839.8px;top:869.0px;width:83.8px;height:3.6px;background:#fffafd"></div>
<div style="left:926.4px;top:869.0px;width:112.8px;height:3.6px;background:#fffafd"></div>
<div style="left:1042.0px;top:869.0px;width:112.5px;height:3.6px;background:#fffafd"></div>
<div style="left:1157.3px;top:869.0px;width:127.7px;height:3.6px;background:#fffafd"></div>
<div style="left:1287.6px;top:869.0px;width:1.9px;height:3.6px;background:#fffafd"></div>
<div class="chk" style="left:478.7px;top:703.6px;width:18.0px;height:17.8px;"></div><svg class="abs" style="left:480.7px;top:705.4px" width="14" height="14" viewBox="0 0 14 14"><path d="M2 6.4 L5.4 10.2 L12 3" fill="none" stroke="#000" stroke-width="2.6"/></svg>
<span class="m" style="left:501.3px;top:705.6px;">A</span>
<div class="chk" style="left:478.7px;top:727.9px;width:18.0px;height:17.8px;"></div><svg class="abs" style="left:480.7px;top:729.7px" width="14" height="14" viewBox="0 0 14 14"><path d="M2 6.4 L5.4 10.2 L12 3" fill="none" stroke="#000" stroke-width="2.6"/></svg>
<span class="m" style="left:501.3px;top:729.9px;">B</span>
<div class="chk" style="left:478.7px;top:752.2px;width:18.0px;height:17.8px;"></div><svg class="abs" style="left:480.7px;top:754.0px" width="14" height="14" viewBox="0 0 14 14"><path d="M2 6.4 L5.4 10.2 L12 3" fill="none" stroke="#000" stroke-width="2.6"/></svg>
<span class="m" style="left:501.3px;top:754.2px;">C</span>
<div class="chk" style="left:478.7px;top:776.4px;width:18.0px;height:17.8px;"></div><svg class="abs" style="left:480.7px;top:778.2px" width="14" height="14" viewBox="0 0 14 14"><path d="M2 6.4 L5.4 10.2 L12 3" fill="none" stroke="#000" stroke-width="2.6"/></svg>
<span class="m" style="left:501.3px;top:778.4px;">R</span>
<div class="chk" style="left:478.7px;top:800.7px;width:18.0px;height:17.8px;"></div><svg class="abs" style="left:480.7px;top:802.5px" width="14" height="14" viewBox="0 0 14 14"><path d="M2 6.4 L5.4 10.2 L12 3" fill="none" stroke="#000" stroke-width="2.6"/></svg>
<span class="m" style="left:501.3px;top:802.7px;">a</span>
<div class="chk" style="left:478.7px;top:825.0px;width:18.0px;height:17.8px;"></div><svg class="abs" style="left:480.7px;top:826.8px" width="14" height="14" viewBox="0 0 14 14"><path d="M2 6.4 L5.4 10.2 L12 3" fill="none" stroke="#000" stroke-width="2.6"/></svg>
<span class="m" style="left:501.3px;top:827.0px;">b</span>
<div class="chk" style="left:478.7px;top:849.3px;width:18.0px;height:17.8px;"></div><svg class="abs" style="left:480.7px;top:851.1px" width="14" height="14" viewBox="0 0 14 14"><path d="M2 6.4 L5.4 10.2 L12 3" fill="none" stroke="#000" stroke-width="2.6"/></svg>
<span class="m" style="left:501.3px;top:851.3px;">c</span>
<div style="left:800.5px;top:672.8px;width:486.0px;height:2.4px;background:#7c7c7c"></div><div class="hd" style="left:801.5px;top:675.0px;width:36.5px;height:22.5px;"></div><div class="hd" style="left:838.0px;top:675.0px;width:86.6px;height:22.5px;"></div><svg class="cj" style="left:847.0px;top:677.2px;" width="34.0" height="17.9" viewBox="0 -880 1905 1000" fill="#000" stroke="#000" stroke-width="14"><title>参量</title><text x="-24" y="0" font-size="1000" letter-spacing="-47.6">参量</text></svg><div class="hd" style="left:924.6px;top:675.0px;width:115.6px;height:22.5px;"></div><svg class="cj" style="left:933.6px;top:677.2px;" width="34.0" height="17.9" viewBox="0 -880 1905 1000" fill="#000" stroke="#000" stroke-width="14"><title>动作</title><text x="-24" y="0" font-size="1000" letter-spacing="-47.6">动作</text></svg><div class="hd" style="left:1040.2px;top:675.0px;width:115.3px;height:22.5px;"></div><svg class="cj" style="left:1049.2px;top:677.2px;" width="34.0" height="17.9" viewBox="0 -880 1905 1000" fill="#000" stroke="#000" stroke-width="14"><title>返回</title><text x="-24" y="0" font-size="1000" letter-spacing="-47.6">返回</text></svg><div class="hd" style="left:1155.5px;top:675.0px;width:130.5px;height:22.5px;"></div><svg class="cj" style="left:1164.5px;top:677.2px;" width="68.0" height="17.9" viewBox="0 -880 3810 1000" fill="#000" stroke="#000" stroke-width="14"><title>返回系数</title><text x="-24" y="0" font-size="1000" letter-spacing="-47.6">返回系数</text></svg>
<div style="left:1286.0px;top:672.8px;width:25.5px;height:2.4px;background:#7c7c7c"></div>
<div style="left:800.5px;top:673.5px;width:2.0px;height:199.5px;background:#808080"></div>
<div class="chk" style="left:809.3px;top:703.8px;width:18.0px;height:17.8px;"></div>
<span class="m" style="left:847.3px;top:705.6px;">UA</span>
<div class="chk" style="left:809.3px;top:728.1px;width:18.0px;height:17.8px;"></div>
<span class="m" style="left:847.3px;top:729.9px;">UB</span>
<div class="chk" style="left:809.3px;top:752.4px;width:18.0px;height:17.8px;"></div>
<span class="m" style="left:847.3px;top:754.2px;">UC</span>
<div class="chk" style="left:809.3px;top:776.7px;width:18.0px;height:17.8px;"></div>
<span class="m" style="left:847.3px;top:778.5px;">IA</span>
<div class="chk" style="left:809.3px;top:801.0px;width:18.0px;height:17.8px;"></div>
<span class="m" style="left:847.3px;top:802.8px;">IB</span>
<div class="chk" style="left:809.3px;top:825.3px;width:18.0px;height:17.8px;"></div>
<span class="m" style="left:847.3px;top:827.1px;">IC</span>
<div class="chk" style="left:809.3px;top:849.6px;width:18.0px;height:17.8px;"></div>
<span class="m" style="left:847.3px;top:851.4px;">Ux</span>
<div style="left:1289.5px;top:675.0px;width:21.0px;height:198.0px;background:#fff"></div>
<div style="left:1289.8px;top:699.8px;width:20.5px;height:29.6px;background:#dbdbdb"></div>
<svg class="abs" style="left:1293px;top:683px" width="14" height="9" viewBox="0 0 14 9"><path d="M1.5 7.5 L7 2 L12.5 7.5" fill="none" stroke="#3c3c3c" stroke-width="2.3"/></svg>
<svg class="abs" style="left:1293px;top:856px" width="14" height="9" viewBox="0 0 14 9"><path d="M1.5 1.5 L7 7 L12.5 1.5" fill="none" stroke="#3c3c3c" stroke-width="2.3"/></svg>
<svg class="cj" style="left:195.0px;top:892.0px;" width="33.6" height="16.8" viewBox="0 -880 2000 1000" fill="#000" stroke="#000" stroke-width="18"><title>就绪</title><text x="0" y="0" font-size="1000">就绪</text></svg>
<div class="sbox" style="left:855.0px;top:889.3px;width:137.0px;height:24.0px;"></div>
<svg class="cj" style="left:858.3px;top:892.0px;" width="120.6" height="17.4" viewBox="0 -880 6933 1000" fill="#000" stroke="#000" stroke-width="18"><title>运行时间: 0.00s</title><text x="0" y="0" font-size="1000">运行时间</text><text x="4000.0" y="0" font-size="977.0">: 0.00s</text></svg>
<div class="sbox" style="left:996.0px;top:889.3px;width:317.0px;height:24.0px;"></div>
<svg class="cj" style="left:998.3px;top:892.5px;" width="56.9" height="17.4" viewBox="0 -880 3271 1000" fill="#000" stroke="#000" stroke-width="18"><title>开关量:</title><text x="0" y="0" font-size="1000">开关量</text><text x="3000.0" y="0" font-size="977.0">:</text></svg>
<span class="s" style="left:1058.3px;top:891.5px;font-size:17.0px;color:#000;">A</span>
<div style="left:1070.9px;top:891.9px;width:12.8px;height:12.8px;border-radius:50%;background:#858585"></div>
<span class="s" style="left:1094.0px;top:891.5px;font-size:17.0px;color:#000;">B</span>
<div style="left:1105.3px;top:891.9px;width:12.8px;height:12.8px;border-radius:50%;background:#858585"></div>
<span class="s" style="left:1128.3px;top:891.5px;font-size:17.0px;color:#000;">C</span>
<div style="left:1139.6px;top:891.9px;width:12.8px;height:12.8px;border-radius:50%;background:#858585"></div>
<span class="s" style="left:1162.7px;top:891.5px;font-size:17.0px;color:#000;">R</span>
<div style="left:1174.3px;top:891.9px;width:12.8px;height:12.8px;border-radius:50%;background:#858585"></div>
<span class="s" style="left:1197.3px;top:891.5px;font-size:17.0px;color:#000;">a</span>
<div style="left:1208.6px;top:891.9px;width:12.8px;height:12.8px;border-radius:50%;background:#858585"></div>
<span class="s" style="left:1232.7px;top:891.5px;font-size:17.0px;color:#000;">b</span>
<div style="left:1243.6px;top:891.9px;width:12.8px;height:12.8px;border-radius:50%;background:#858585"></div>
<span class="s" style="left:1266.7px;top:891.5px;font-size:17.0px;color:#000;">c</span>
<div style="left:1277.6px;top:891.9px;width:12.8px;height:12.8px;border-radius:50%;background:#858585"></div>
<div style="left:194.0px;top:912.7px;width:1119.5px;height:1.6px;background:#7fb0e8"></div>
<div style="left:800px;top:176px;width:513.5px;height:488px;background:#000;overflow:hidden">
<svg class="abs" style="left:0;top:0" width="513.5" height="488" viewBox="800 176 513.5 488">
<title>phasor diagram</title>
<g fill="#474747">
<path d="M920 373.6 H1142.6 L1148.4 401.8 H959.6 V516 C958 560 940 598 899 615.5 H897.2 V575.5 C911 566 915 545 915 520 V378.6 Q915 373.6 920 373.6 Z"/>
<path d="M1030.8 417 H1072.2 V576 H1030.8 Z"/>
<path d="M978.8 462.6 H1136 L1142.4 489.4 H978.8 Z"/>
<path d="M968.4 575.4 H1142 L1149.4 603.4 H968.4 Z"/>
<path d="M1088.5 505.6 H1124 L1136.2 559 H1101.8 Z"/>
<path d="M790 374.6 H847.4 L853 401.4 H790 Z"/>
<path d="M790 412.5 H818.5 V471.9 H790 Z"/>
<path d="M790 485.8 H842.2 V596 Q842.2 613.4 824 613.4 H790 Z"/>
</g>
<g fill="none" stroke="#7e7e7e" stroke-width=".9">
<ellipse cx="1062.5" cy="420.2" rx="35.9" ry="35.4"/>
<ellipse cx="1062.5" cy="420.2" rx="84.4" ry="83.3"/>
<ellipse cx="1062.5" cy="420.2" rx="131.8" ry="130.1"/>
<ellipse cx="1062.5" cy="420.2" rx="180.7" ry="178.4"/>
<ellipse cx="1062.5" cy="420.2" rx="228.6" ry="225.7"/>
<path d="M836.8 420.4 L1289.2 420.4"/>
<path d="M867.1 531.8 L1258.9 308.9"/>
<path d="M949.9 613.4 L1176.1 227.4"/>
<path d="M1063.0 643.3 L1063.0 197.5"/>
<path d="M1176.1 613.4 L949.9 227.4"/>
<path d="M1258.9 531.8 L867.1 308.9"/>
</g>
<path d="M1063.0 420.4 L1070.6 420.4 M1070.6 420.4 L1066.6 422.5 M1070.6 420.4 L1066.6 418.3" stroke="#ffff00" stroke-width="2.2" fill="none" stroke-linecap="round"/>
<path d="M1063.0 420.4 L1059.2 426.9 M1059.2 426.9 L1059.4 422.4 M1059.2 426.9 L1063.0 424.5" stroke="#3ce63c" stroke-width="2.2" fill="none" stroke-linecap="round"/>
<path d="M1063.0 420.4 L1059.2 413.9 M1059.2 413.9 L1063.0 416.3 M1059.2 413.9 L1059.4 418.4" stroke="#ff2020" stroke-width="2.2" fill="none" stroke-linecap="round"/>
<path d="M1063.0 420.4 L1053.4 404.0 M1053.4 404.0 L1062.2 409.7 M1053.4 404.0 L1054.0 414.5" stroke="#ff2020" stroke-width="1.5" fill="none" stroke-linecap="round"/>
<path d="M1063.0 420.4 L1053.4 436.8 M1053.4 436.8 L1054.0 426.3 M1053.4 436.8 L1062.2 431.1" stroke="#3ce63c" stroke-width="1.5" fill="none" stroke-linecap="round"/>
<path d="M1063.0 420.4 L1082.2 420.4 M1082.2 420.4 L1072.8 425.2 M1082.2 420.4 L1072.8 415.6" stroke="#ffff00" stroke-width="1.5" fill="none" stroke-linecap="round"/>
<g font-family="Liberation Sans" font-size="17.2">
<path d="M813.0 621.0 L857.6 621.0 M857.6 621.0 L851.2 623.8 M857.6 621.0 L851.2 618.2" stroke="#ffff00" stroke-width="1.4" fill="none" stroke-linecap="round"/>
<text x="859.6" y="623.4" fill="#ffff00">UA</text>
<path d="M1243.5 621.0 L1289.5 621.0" stroke="#ffff00" stroke-width="3.1" fill="none"/><path d="M1289.5 621.0 M1289.5 621.0 L1284.0 623.8 M1289.5 621.0 L1284.0 618.2" stroke="#ffff00" stroke-width="1.8" fill="none" stroke-linecap="round"/>
<text x="1293.4" y="623.4" fill="#ffff00">IA</text>
<path d="M813.0 635.5 L857.6 635.5 M857.6 635.5 L851.2 638.3 M857.6 635.5 L851.2 632.7" stroke="#00ff00" stroke-width="1.4" fill="none" stroke-linecap="round"/>
<text x="859.6" y="637.9" fill="#00ff00">UB</text>
<path d="M1243.5 635.5 L1289.5 635.5" stroke="#00ff00" stroke-width="3.1" fill="none"/><path d="M1289.5 635.5 M1289.5 635.5 L1284.0 638.3 M1289.5 635.5 L1284.0 632.7" stroke="#00ff00" stroke-width="1.8" fill="none" stroke-linecap="round"/>
<text x="1293.4" y="637.9" fill="#00ff00">IB</text>
<path d="M813.0 650.0 L857.6 650.0 M857.6 650.0 L851.2 652.8 M857.6 650.0 L851.2 647.2" stroke="#ff0000" stroke-width="1.4" fill="none" stroke-linecap="round"/>
<text x="859.6" y="652.4" fill="#ff0000">UC</text>
<path d="M1243.5 650.0 L1289.5 650.0" stroke="#ff0000" stroke-width="3.1" fill="none"/><path d="M1289.5 650.0 M1289.5 650.0 L1284.0 652.8 M1289.5 650.0 L1284.0 647.2" stroke="#ff0000" stroke-width="1.8" fill="none" stroke-linecap="round"/>
<text x="1293.4" y="652.4" fill="#ff0000">IC</text>
</g>
</svg></div>
</div>
</div>
</body></html>
